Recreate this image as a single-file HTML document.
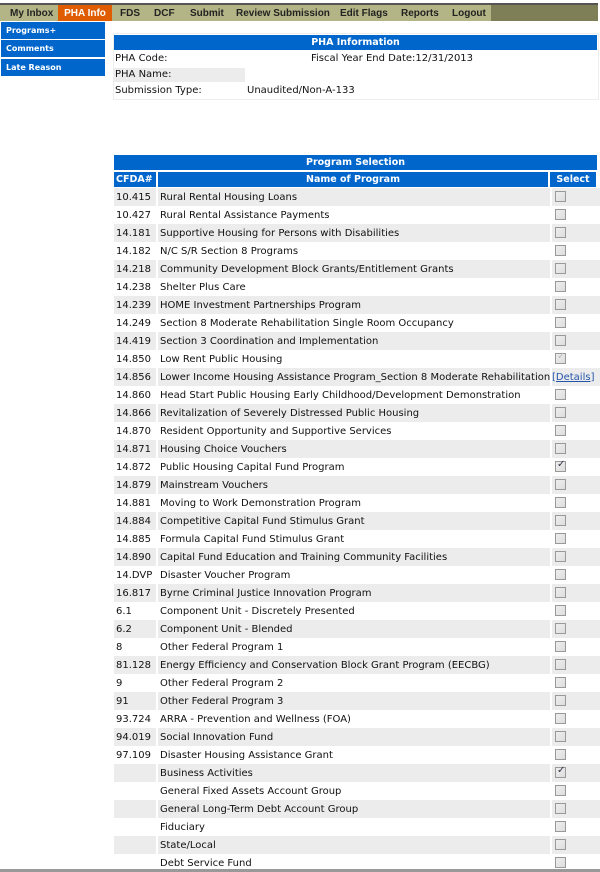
<!DOCTYPE html>
<html><head><meta charset="utf-8"><style>
*{margin:0;padding:0;box-sizing:border-box}
body{width:600px;height:872px;overflow:hidden;background:#fff;font-family:"DejaVu Sans",Verdana,sans-serif;font-size:10px;color:#111;position:relative}
.nav{position:absolute;left:0;top:3px;width:598px;height:18px;background:#7f7f57;border-top:2px solid #555}
.navl{position:absolute;left:0;top:0;width:491px;height:16px;background:#b4b586}
.nav span{position:absolute;top:3px;font-weight:bold;font-size:10px;color:#222;font-family:"Liberation Sans",Arial,sans-serif}
.nav .act{background:#e05c00;color:#fff;top:0;height:16px;padding-top:3px;left:58px;width:54px;text-align:center}
.lm{position:absolute;left:1px;width:104px;height:17px;background:#0066cc;color:#fff;font-weight:bold;font-size:8px;padding:4px 0 0 5px}
.hdr{position:absolute;background:#0066cc;color:#fff;font-weight:bold;text-align:center;font-size:9.5px}
.info{position:absolute;left:113px;top:33px;width:486px;height:67px;border:1px solid #eee}
table{position:absolute;left:112px;top:188px;border-collapse:separate;border-spacing:2px 0;width:488px;table-layout:fixed}
td{height:18px;padding:0 0 0 2px;white-space:nowrap;overflow:hidden}
tr:nth-child(odd) td{background:#ececec}
col.c{width:42px}col.n{width:392px}col.s{width:48px}
.cb{display:inline-block;width:11px;height:11px;border:1px solid #999;background:linear-gradient(135deg,#eee,#ddd);margin-left:1px;vertical-align:middle;position:relative}
.cb.k::after{content:"✓";position:absolute;left:1px;top:-3px;font-size:10px;color:#334}
.cb.g::after{content:"✓";position:absolute;left:1px;top:-3px;font-size:10px;color:#bbb}
a{color:#2255aa}
</style></head><body>
<div class="nav"><div class="navl"></div>
<span style="left:10px">My Inbox</span><span class="act">PHA Info</span><span style="left:120px">FDS</span><span style="left:154px">DCF</span><span style="left:190px">Submit</span><span style="left:236px">Review Submission</span><span style="left:340px">Edit Flags</span><span style="left:401px">Reports</span><span style="left:452px">Logout</span></div>
<div class="lm" style="top:22px">Programs+</div>
<div class="lm" style="top:40px">Comments</div>
<div class="lm" style="top:59px">Late Reason</div>
<div class="info"></div>
<div class="hdr" style="left:114px;top:35px;width:483px;height:15px;padding-top:2px">PHA Information</div>
<div style="position:absolute;left:115px;top:53px">PHA Code:</div>
<div style="position:absolute;left:311px;top:53px">Fiscal Year End Date:12/31/2013</div>
<div style="position:absolute;left:114px;top:68px;width:131px;height:14px;background:#ececec;padding:1px 0 0 1px">PHA Name:</div>
<div style="position:absolute;left:115px;top:85px">Submission Type:</div>
<div style="position:absolute;left:247px;top:85px">Unaudited/Non-A-133</div>
<div class="hdr" style="left:114px;top:155px;width:483px;height:15px;padding-top:2px">Program Selection</div>
<div class="hdr" style="left:114px;top:172px;width:42px;height:15px;padding:2px 0 0 2px;text-align:left">CFDA#</div>
<div class="hdr" style="left:158px;top:172px;width:390px;height:15px;padding-top:2px">Name of Program</div>
<div class="hdr" style="left:550px;top:172px;width:46px;height:15px;padding-top:2px">Select</div>
<table><colgroup><col class="c"><col class="n"><col class="s"></colgroup>
<tr><td>10.415</td><td>Rural Rental Housing Loans</td><td><i class="cb"></i></td></tr>
<tr><td>10.427</td><td>Rural Rental Assistance Payments</td><td><i class="cb"></i></td></tr>
<tr><td>14.181</td><td>Supportive Housing for Persons with Disabilities</td><td><i class="cb"></i></td></tr>
<tr><td>14.182</td><td>N/C S/R Section 8 Programs</td><td><i class="cb"></i></td></tr>
<tr><td>14.218</td><td>Community Development Block Grants/Entitlement Grants</td><td><i class="cb"></i></td></tr>
<tr><td>14.238</td><td>Shelter Plus Care</td><td><i class="cb"></i></td></tr>
<tr><td>14.239</td><td>HOME Investment Partnerships Program</td><td><i class="cb"></i></td></tr>
<tr><td>14.249</td><td>Section 8 Moderate Rehabilitation Single Room Occupancy</td><td><i class="cb"></i></td></tr>
<tr><td>14.419</td><td>Section 3 Coordination and Implementation</td><td><i class="cb"></i></td></tr>
<tr><td>14.850</td><td>Low Rent Public Housing</td><td><i class="cb g"></i></td></tr>
<tr><td>14.856</td><td>Lower Income Housing Assistance Program_Section 8 Moderate Rehabilitation</td><td style="padding:0"><a href="#">[Details]</a></td></tr>
<tr><td>14.860</td><td>Head Start Public Housing Early Childhood/Development Demonstration</td><td><i class="cb"></i></td></tr>
<tr><td>14.866</td><td>Revitalization of Severely Distressed Public Housing</td><td><i class="cb"></i></td></tr>
<tr><td>14.870</td><td>Resident Opportunity and Supportive Services</td><td><i class="cb"></i></td></tr>
<tr><td>14.871</td><td>Housing Choice Vouchers</td><td><i class="cb"></i></td></tr>
<tr><td>14.872</td><td>Public Housing Capital Fund Program</td><td><i class="cb k"></i></td></tr>
<tr><td>14.879</td><td>Mainstream Vouchers</td><td><i class="cb"></i></td></tr>
<tr><td>14.881</td><td>Moving to Work Demonstration Program</td><td><i class="cb"></i></td></tr>
<tr><td>14.884</td><td>Competitive Capital Fund Stimulus Grant</td><td><i class="cb"></i></td></tr>
<tr><td>14.885</td><td>Formula Capital Fund Stimulus Grant</td><td><i class="cb"></i></td></tr>
<tr><td>14.890</td><td>Capital Fund Education and Training Community Facilities</td><td><i class="cb"></i></td></tr>
<tr><td>14.DVP</td><td>Disaster Voucher Program</td><td><i class="cb"></i></td></tr>
<tr><td>16.817</td><td>Byrne Criminal Justice Innovation Program</td><td><i class="cb"></i></td></tr>
<tr><td>6.1</td><td>Component Unit - Discretely Presented</td><td><i class="cb"></i></td></tr>
<tr><td>6.2</td><td>Component Unit - Blended</td><td><i class="cb"></i></td></tr>
<tr><td>8</td><td>Other Federal Program 1</td><td><i class="cb"></i></td></tr>
<tr><td>81.128</td><td>Energy Efficiency and Conservation Block Grant Program (EECBG)</td><td><i class="cb"></i></td></tr>
<tr><td>9</td><td>Other Federal Program 2</td><td><i class="cb"></i></td></tr>
<tr><td>91</td><td>Other Federal Program 3</td><td><i class="cb"></i></td></tr>
<tr><td>93.724</td><td>ARRA - Prevention and Wellness (FOA)</td><td><i class="cb"></i></td></tr>
<tr><td>94.019</td><td>Social Innovation Fund</td><td><i class="cb"></i></td></tr>
<tr><td>97.109</td><td>Disaster Housing Assistance Grant</td><td><i class="cb"></i></td></tr>
<tr><td></td><td>Business Activities</td><td><i class="cb k"></i></td></tr>
<tr><td></td><td>General Fixed Assets Account Group</td><td><i class="cb"></i></td></tr>
<tr><td></td><td>General Long-Term Debt Account Group</td><td><i class="cb"></i></td></tr>
<tr><td></td><td>Fiduciary</td><td><i class="cb"></i></td></tr>
<tr><td></td><td>State/Local</td><td><i class="cb"></i></td></tr>
<tr><td></td><td>Debt Service Fund</td><td><i class="cb"></i></td></tr>
</table>
<div style="position:absolute;left:0;top:869px;width:600px;height:3px;background:#999"></div>
</body></html>
